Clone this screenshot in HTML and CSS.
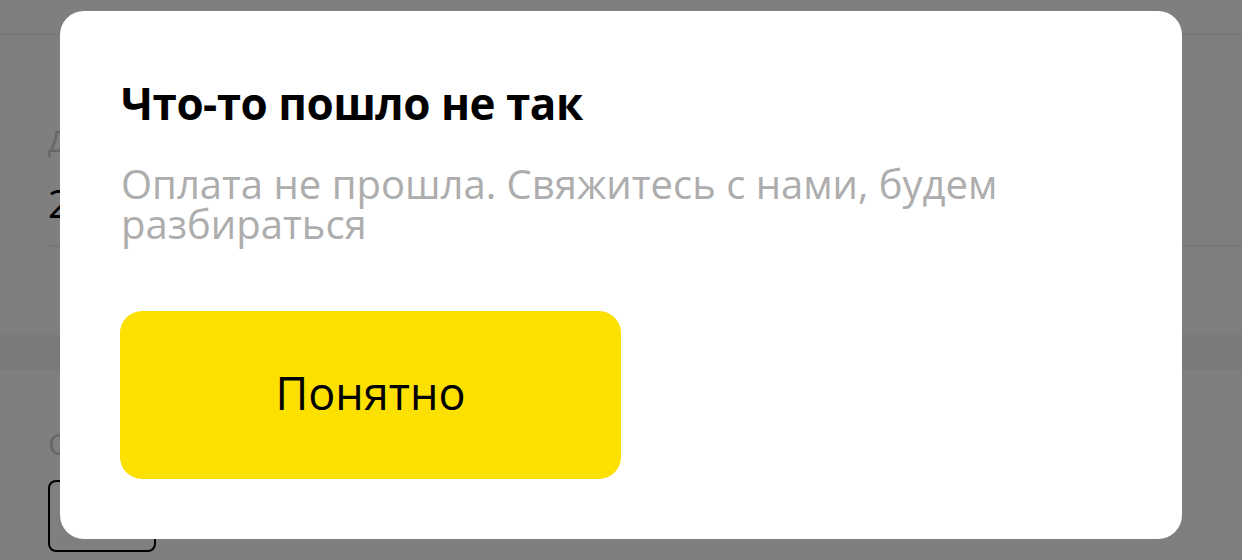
FILE: index.html
```html
<!DOCTYPE html>
<html lang="ru">
<head>
<meta charset="utf-8">
<link rel="stylesheet" href="styles.css">
</head>
<body>
<div class="page">
  <div class="topbar"></div>
  <div class="section">
    <div class="label">Дата</div>
    <div class="value">25 марта</div>
  </div>
  <div class="band"></div>
  <div class="section2">
    <div class="label">Сумма</div>
    <div class="chip"></div>
  </div>
</div>
<div class="overlay"></div>
<div class="modal">
  <h1 class="title">Что-то пошло не так</h1>
  <p class="text">Оплата не прошла. Свяжитесь с нами, будем разбираться</p>
  <button class="btn">Понятно</button>
</div>
</body>
</html>
```
FILE: styles.css
```css
html, body {
  margin: 0;
  padding: 0;
  width: 1242px;
  height: 560px;
  overflow: hidden;
  background: #fff;
  font-family: "Open Sans", Roboto, sans-serif;
}
.page {
  height: 560px;
}
.topbar {
  height: 33px;
  border-bottom: 2px solid #eeeeee;
}
.section {
  margin-left: 48px;
  padding-top: 88px;
  height: 122px;
  border-bottom: 2px solid #eeeeee;
}
.label {
  font-size: 30px;
  color: #cfcfcf;
  line-height: 36px;
}
.value {
  font-size: 38px;
  color: #000;
  line-height: 44px;
  margin-top: 22px;
}
.band {
  height: 35px;
  margin-top: 88px;
  background: #f4f4f4;
}
.section2 {
  margin-left: 48px;
  padding-top: 56px;
}
.chip {
  width: 104px;
  height: 68px;
  border: 2px solid #000;
  border-radius: 8px;
  margin-top: 18px;
}
.overlay {
  position: absolute;
  inset: 0;
  background: rgba(0, 0, 0, 0.5);
}
.modal {
  position: absolute;
  left: 60px;
  top: 11px;
  width: 1122px;
  height: 528px;
  box-sizing: border-box;
  background: #fff;
  border-radius: 24px;
  padding: 67px 60px 0 61px;
  display: flex;
  flex-direction: column;
  align-items: flex-start;
}
.title {
  margin: 0;
  font-size: 44px;
  font-weight: 700;
  line-height: 50px;
  color: #000;
  letter-spacing: -0.5px;
}
.text {
  margin: 36px 0 0;
  font-size: 40px;
  line-height: 40px;
  color: #adadad;
  width: 940px;
}
.btn {
  margin-top: 67px;
  margin-left: -1px;
  width: 501px;
  height: 168px;
  border: 0;
  border-radius: 22px;
  background: #fce000;
  color: #000;
  font-family: "Open Sans", Roboto, sans-serif;
  font-size: 45px;
  padding: 0 0 6px;
}
```
